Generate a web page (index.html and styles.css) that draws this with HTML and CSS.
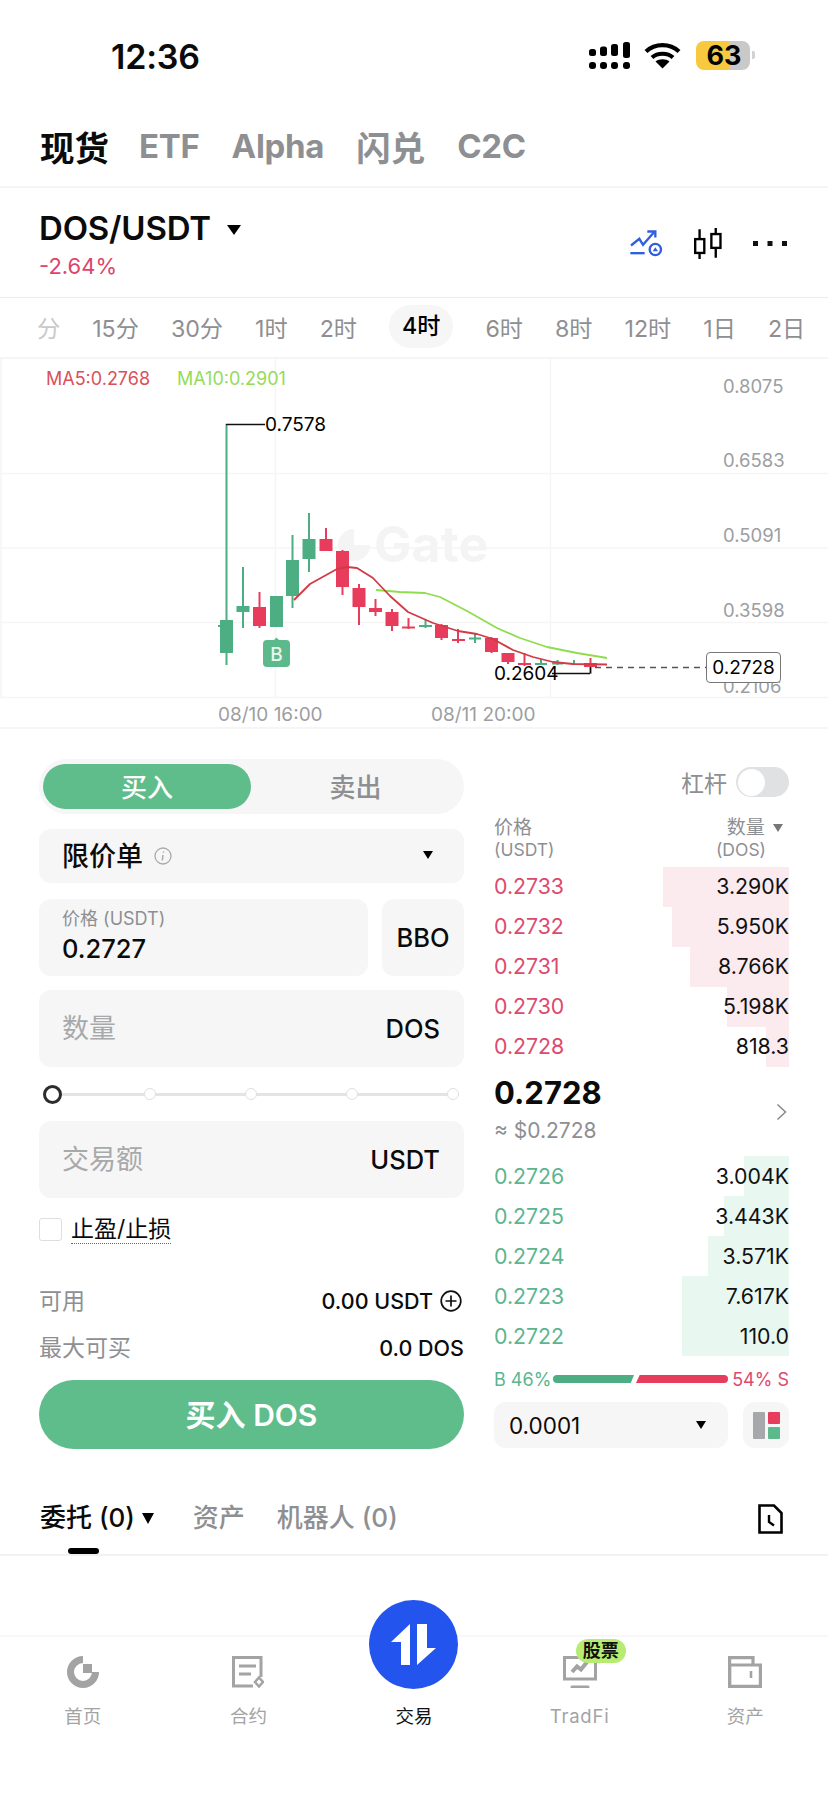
FILE: index.html
```html
<!DOCTYPE html>
<html lang="zh">
<head>
<meta charset="utf-8">
<title>DOS/USDT</title>
<link rel="stylesheet" href="styles.css">
</head>
<body>
<div class="page">
  <header class="status">
    <span class="clock">12:36</span>
    <div class="status-icons">
      <svg class="signal" width="42" height="28" viewBox="0 0 42 28" fill="#000">
        <rect x="1" y="7" width="7" height="7" rx="2.5"/><rect x="12" y="4.5" width="7" height="9.5" rx="2.5"/><rect x="23" y="2" width="7" height="12" rx="2.5"/><rect x="35" y="0" width="7" height="16" rx="2.5"/>
        <rect x="1" y="20" width="7" height="7" rx="3"/><rect x="12" y="20" width="7" height="7" rx="3"/><rect x="23" y="20" width="7" height="7" rx="3"/><rect x="35" y="20" width="7" height="7" rx="3"/>
      </svg>
      <svg class="wifi" width="37" height="27" viewBox="0 0 37 27" fill="none" stroke="#000" stroke-width="4.2">
        <path d="M2 9.5C11 1 26 1 35 9.5"/><path d="M8 15.5C13.5 10.5 23.5 10.5 29 15.5"/><path d="M18.500 26.500L11.500 19.500C15 16.500 22 16.500 25.500 19.500Z" fill="#000" stroke="none"/>
      </svg>
      <div class="battery"><span class="battery-num">63</span></div>
      <span class="battery-nub"></span>
    </div>
  </header>

  <nav class="market-tabs">
    <span class="market-tab market-tab-cjk is-active">现货</span>
    <span class="market-tab">ETF</span>
    <span class="market-tab">Alpha</span>
    <span class="market-tab market-tab-cjk">闪兑</span>
    <span class="market-tab">C2C</span>
  </nav>

  <section class="pair">
    <div class="pair-info">
      <div class="pair-name">DOS/USDT <i class="caret caret-lg"></i></div>
      <div class="pair-change">-2.64%</div>
    </div>
    <div class="pair-actions">
      <svg width="33" height="27" viewBox="32 44 99 80" fill="none" stroke="#2f5fe0" stroke-width="7">
        <path d="M35 90L60 70L71 88L104 50"/><path d="M84 48H108V66"/><path d="M33 113H76"/><circle cx="108" cy="102" r="17"/><path d="M108 95L116 107H100Z" fill="#2f5fe0" stroke="none"/>
      </svg>
      <svg width="30" height="31" viewBox="222 38 88 92" fill="none" stroke="#000" stroke-width="7">
        <path d="M241 42V70M241 112V130M289 38V55M289 97V126"/><rect x="228" y="71" width="27" height="41"/><rect x="276" y="56" width="27" height="41"/>
      </svg>
      <svg width="34" height="6" viewBox="0 0 34 6" fill="#111"><rect x="0" y="0" width="5" height="5"/><rect x="14.500" y="0" width="5" height="5"/><rect x="29" y="0" width="5" height="5"/></svg>
    </div>
  </section>

  <nav class="intervals">
    <span class="interval is-faded">分</span>
    <span class="interval">15分</span>
    <span class="interval">30分</span>
    <span class="interval">1时</span>
    <span class="interval">2时</span>
    <span class="interval is-active">4时</span>
    <span class="interval">6时</span>
    <span class="interval">8时</span>
    <span class="interval">12时</span>
    <span class="interval">1日</span>
    <span class="interval">2日</span>
  </nav>

  <section class="chart">
    <svg class="chart-svg" width="828" height="370" viewBox="0 358 828 370">
      <g stroke="#f5f5f5" stroke-width="1.500">
        <path d="M0 472.500H828M0 547H828M0 621.500H828M0 696.500H828M1 358V696M275.500 358V696M550.500 358V696"/>
      </g>
      <g class="watermark">
        <path d="M354 528a16 16 0 1 0 16 16h-16z" fill="#f4f4f4"/>
        <text x="374" y="561" class="wm-text">Gate</text>
      </g>
      <g stroke="#4cae82" stroke-width="2" fill="none">
        <path d="M226.500 423V664M243 566V627M276.500 595V626M292.500 534V607M309 512V571M425.500 619V627M475 632V642M541 658V664M557.500 659V664M574 659V664"/>
        <path d="M218 625H233M469 637.500H481M535 663H547M552 662.500H563"/>
      </g>
      <g fill="#4cae82">
        <rect x="220" y="619" width="13" height="33"/><rect x="236.500" y="605" width="13" height="6"/><rect x="270" y="595" width="13" height="31"/><rect x="286" y="559" width="13" height="36"/><rect x="302.500" y="538" width="13" height="20"/><rect x="419" y="624" width="13" height="2"/>
      </g>
      <g stroke="#e83c5c" stroke-width="2" fill="none">
        <path d="M259.500 591V627M326 527V550M342.500 549V594M359 583V624M375.500 598V615M392 608V630M408.500 617V628M441.500 623V639M458 628V642M491.500 636V652M508 652V663M524.500 652V665M590.500 657V673"/>
        <path d="M402 626.500H415M452 639H465M518 663H531"/>
      </g>
      <g fill="#e83c5c">
        <rect x="253" y="606" width="13" height="19"/><rect x="319.500" y="538" width="13" height="12"/><rect x="336" y="550" width="13" height="36"/><rect x="352.500" y="587" width="13" height="19"/><rect x="369" y="607" width="13" height="4"/><rect x="385.500" y="611" width="13" height="14"/><rect x="435" y="624" width="13" height="13"/><rect x="485" y="637" width="13" height="14"/><rect x="501.500" y="652" width="13" height="9"/><rect x="584" y="662" width="13" height="4"/>
      </g>
      <polyline points="376,589 400,591 425,592 440,596 467,610 497,627 520,637 547,646 577,652 607,657" fill="none" stroke="#8fdc4e" stroke-width="1.800" stroke-linejoin="round"/>
      <polyline points="294,599 310,583 337,568 347,566 357,567 373,577 390,595 408,611 433,622 458,630 477,633 493,638 513,649 533,656 553,661 573,663 607,663.500" fill="none" stroke="#d23a45" stroke-width="1.800" stroke-linejoin="round"/>
      <path d="M226 423.500H265M552 672.500H590M590.500 666V672" stroke="#111" stroke-width="1.300" fill="none"/>
      <path d="M595 666.500H706" stroke="#555" stroke-width="1.300" stroke-dasharray="6 5" fill="none"/>
      <text x="265" y="429.500" class="ext-text">0.7578</text>
      <text x="494" y="678.500" class="ext-text">0.2604</text>
      <path d="M263 643a4 4 0 0 1 4-4h7l2.500-2.500 2.500 2.500h7a4 4 0 0 1 4 4v19a4 4 0 0 1-4 4h-19a4 4 0 0 1-4-4z" fill="#5cb98c"/>
      <text x="276.500" y="660" class="badge-text">B</text>
      <text x="46" y="383.500" class="ma ma5">MA5:0.2768</text>
      <text x="177" y="383.500" class="ma ma10">MA10:0.2901</text>
      <text x="723" y="392" class="axis">0.8075</text>
      <text x="723" y="466" class="axis">0.6583</text>
      <text x="723" y="541" class="axis">0.5091</text>
      <text x="723" y="616" class="axis">0.3598</text>
      <text x="723" y="691.500" class="axis">0.2106</text>
      <rect x="706.500" y="651.500" width="74" height="30" rx="3.500" fill="#fff" stroke="#777" stroke-width="1"/>
      <text x="743.500" y="672.500" class="tag-text">0.2728</text>
      <text x="218" y="719.500" class="axis axis-date">08/10 16:00</text>
      <text x="431" y="719.500" class="axis axis-date">08/11 20:00</text>
    </svg>
  </section>

  <section class="trade">
    <div class="form">
      <div class="side-toggle">
        <span class="side is-buy">买入</span>
        <span class="side">卖出</span>
      </div>
      <div class="field field-select">
        <span class="order-type">限价单</span>
        <svg class="info" width="18" height="18" viewBox="0 0 18 18" fill="none"><circle cx="9" cy="9" r="8" stroke="#aaa" stroke-width="1.300"/><path d="M9.500 4.500v1.300M9 8l-.7 5.500" stroke="#aaa" stroke-width="1.500"/></svg>
        <i class="caret caret-end"></i>
      </div>
      <div class="price-row">
        <div class="field field-price">
          <span class="field-label">价格 (USDT)</span>
          <span class="field-value">0.2727</span>
        </div>
        <div class="field field-bbo">BBO</div>
      </div>
      <div class="field field-input"><span class="placeholder">数量</span><span class="unit">DOS</span></div>
      <div class="slider">
        <span class="knob"></span><span class="tick"></span><span class="tick"></span><span class="tick"></span><span class="tick"></span>
      </div>
      <div class="field field-input"><span class="placeholder">交易额</span><span class="unit">USDT</span></div>
      <label class="tpsl"><span class="checkbox"></span><span class="tpsl-text">止盈/止损</span></label>
      <div class="info-row info-first"><span class="info-key">可用</span><span class="info-val">0.00 USDT
        <svg width="22" height="22" viewBox="0 0 22 22" fill="none" stroke="#111" stroke-width="1.700"><circle cx="11" cy="11" r="9.800"/><path d="M11 5.500v11M5.500 11h11"/></svg></span></div>
      <div class="info-row"><span class="info-key">最大可买</span><span class="info-val">0.0 DOS</span></div>
      <button class="buy-btn">买入 DOS</button>
    </div>

    <div class="book">
      <div class="leverage"><span>杠杆</span><span class="switch"><span class="switch-knob"></span></span></div>
      <div class="book-head">
        <div><div class="head-top">价格</div><div class="head-sub">(USDT)</div></div>
        <div class="head-right"><div class="head-top head-top-pad">数量 <i class="caret caret-grey"></i></div><div class="head-sub head-sub-pad">(DOS)</div></div>
      </div>
      <div class="row ask" style="--d:126px"><span>0.2733</span><b>3.290K</b></div>
      <div class="row ask" style="--d:117px"><span>0.2732</span><b>5.950K</b></div>
      <div class="row ask" style="--d:99px"><span>0.2731</span><b>8.766K</b></div>
      <div class="row ask" style="--d:62px"><span>0.2730</span><b>5.198K</b></div>
      <div class="row ask" style="--d:23px"><span>0.2728</span><b>818.3</b></div>
      <div class="mid">
        <div>
          <div class="mid-price">0.2728</div>
          <div class="mid-usd">≈ $0.2728</div>
        </div>
        <svg width="11" height="18" viewBox="0 0 11 18" fill="none" stroke="#888" stroke-width="1.500"><path d="M1.500 1.500L9.500 9L1.500 16.500"/></svg>
      </div>
      <div class="row bid" style="--d:45px"><span>0.2726</span><b>3.004K</b></div>
      <div class="row bid" style="--d:65px"><span>0.2725</span><b>3.443K</b></div>
      <div class="row bid" style="--d:81px"><span>0.2724</span><b>3.571K</b></div>
      <div class="row bid" style="--d:107px"><span>0.2723</span><b>7.617K</b></div>
      <div class="row bid" style="--d:107px"><span>0.2722</span><b>110.0</b></div>
      <div class="ratio">
        <span class="ratio-b">B 46%</span>
        <span class="bar bar-b"></span>
        <span class="bar bar-s"></span>
        <span class="ratio-s">54% S</span>
      </div>
      <div class="book-foot">
        <div class="precision"><span>0.0001</span><i class="caret"></i></div>
        <div class="layout-btn">
          <svg width="27" height="27" viewBox="0 0 27 27"><rect width="12" height="27" rx="1" fill="#a6a8ab"/><rect x="15" width="12" height="12" rx="1" fill="#e83c5c"/><rect x="15" y="15" width="12" height="12" rx="1" fill="#5cb98c"/></svg>
        </div>
      </div>
    </div>
  </section>

  <nav class="order-tabs">
    <span class="order-tab is-active">委托 (0) <i class="caret caret-md"></i></span>
    <span class="order-tab">资产</span>
    <span class="order-tab">机器人 (0)</span>
    <svg class="order-doc" width="25" height="30" viewBox="0 0 25 30" fill="none" stroke="#000" stroke-width="2.600"><path d="M1.500 1.500H16L23.500 9V28.500H1.500Z"/><path d="M11 11V18L16 21.500" stroke-width="2.400"/></svg>
  </nav>

  <div class="spacer"></div>

  <footer class="tabbar">
    <div class="tab">
      <svg width="32" height="32" viewBox="0 0 32 32" fill="none"><path d="M16 3.500A12.500 12.500 0 1 0 28.500 16" stroke="#a3a3a3" stroke-width="7"/><rect x="16" y="8" width="9" height="9" fill="#a3a3a3"/></svg>
      <span>首页</span>
    </div>
    <div class="tab">
      <svg width="32" height="32" viewBox="0 0 32 32" fill="none" stroke="#a3a3a3" stroke-width="3"><path d="M21 30H1.500V1.500H29V21"/><path d="M7 10H24M7 18H19"/><path d="M27 21.500L31 26L27 30.500L23 26Z" stroke-width="2.500"/></svg>
      <span>合约</span>
    </div>
    <div class="tab tab-main">
      <div class="trade-fab">
        <svg width="45" height="41" viewBox="0 0 45 41" fill="#fff"><path d="M19 0V41H10V18H0Z"/><path d="M26 41V0H36V24H45Z"/></svg>
      </div>
      <span>交易</span>
    </div>
    <div class="tab">
      <svg width="34" height="32" viewBox="0 0 34 32" fill="none" stroke="#a3a3a3" stroke-width="3"><path d="M1.500 1.500H32.500V23H1.500Z"/><path d="M9 31H25" stroke-linecap="round"/><path d="M9 16L14 10.500L18 13.500L24 6" stroke-width="4"/></svg>
      <span class="tab-latin">TradFi</span>
      <em class="tab-badge">股票</em>
    </div>
    <div class="tab">
      <svg width="34" height="32" viewBox="0 0 34 32" fill="none" stroke="#a3a3a3" stroke-width="3.200"><path d="M1.600 30.400V1.600H25V9"/><path d="M1.600 9H32.400V30.400H1.600Z"/><path d="M23 15V22" stroke-width="2.600"/></svg>
      <span>资产</span>
    </div>
  </footer>
</div>
</body>
</html>
```

FILE: styles.css
```css
* { box-sizing: border-box; }
html, body { margin: 0; padding: 0; background: #fff; }
body {
  font-family: Inter, "Noto Sans CJK SC", "Noto Sans", sans-serif;
  color: #0b0b0b;
}
.page { width: 828px; height: 1795px; display: flex; flex-direction: column; overflow: hidden; }
i { font-style: normal; }

.caret {
  display: inline-block; width: 0; height: 0;
  border-left: 5.5px solid transparent; border-right: 5.5px solid transparent;
  border-top: 8px solid #000;
}
.caret-lg { border-left-width: 7px; border-right-width: 7px; border-top-width: 10px; margin-left: 8px; vertical-align: 5px; }
.caret-md { border-left-width: 6.5px; border-right-width: 6.5px; border-top-width: 11px; margin-left: 0; vertical-align: 3px; }
.caret-grey { border-top-color: #777; margin-left: 3px; vertical-align: 2px; }
.caret-end { margin-left: auto; margin-right: 6px; }

.status { height: 100px; display: flex; justify-content: space-between; padding: 36px 73px 0 111px; }
.clock { font-size: 34px; line-height: 42px; font-weight: 600; letter-spacing: -0.2px; }
.status-icons { display: flex; align-items: flex-start; padding-top: 6px; height: 40px; }
.signal { margin-right: 14px; }
.wifi { margin-right: 15px; }
.battery {
  width: 54px; height: 29px; border-radius: 8px; margin-top: -1px;
  background: linear-gradient(to right, #f6c93f 61%, #c9c9c9 61%);
  display: flex; align-items: center; justify-content: center; padding-left: 2px;
}
.battery-num { font-size: 27px; font-weight: 700; color: #000; }
.battery-nub { width: 3px; height: 8px; margin: 9px 0 0 2px; background: #d2d2d2; border-radius: 0 2px 2px 0; }

.market-tabs { height: 88px; display: flex; gap: 32px; align-items: center; padding: 6px 0 0 40px; border-bottom: 2px solid #f5f5f5; }
.market-tab { font-size: 33px; font-weight: 700; color: #8e8f92; letter-spacing: -0.3px; }
.market-tab-cjk { font-size: 34.500px; letter-spacing: 0; }
.market-tab.is-active { color: #0b0b0b; margin-right: -2px; }

.pair { height: 110px; display: flex; justify-content: space-between; align-items: center; padding: 0 41px 0 39px; border-bottom: 1px solid #ececec; }
.pair-info { padding-top: 4px; }
.pair-name { font-size: 33px; line-height: 40px; font-weight: 600; letter-spacing: -0.2px; white-space: nowrap; }
.pair-change { font-size: 22px; line-height: 30px; color: #e0446a; margin-top: 3px; }
.pair-actions { display: flex; align-items: center; gap: 30px; padding-top: 2px; }

.intervals { height: 61px; display: flex; align-items: center; gap: 32px; padding: 0 0 2px 37px; border-bottom: 2px solid #f5f5f5; overflow: hidden; white-space: nowrap; }
.interval { font-size: 23.200px; color: #8e8f92; flex: none; }
.interval.is-faded { color: #c9c9c9; }
.interval.is-active { color: #000; font-weight: 500; background: #f6f6f6; border-radius: 22px; padding: 0 13px; line-height: 43px; }

.chart { height: 370px; border-bottom: 2px solid #f5f5f5; }
.chart-svg { display: block; }
.wm-text { font-size: 50px; font-weight: 700; fill: #f4f4f4; }
.ma { font-size: 18px; }
.ma5 { fill: #d9505a; }
.ma10 { fill: #93dc5a; }
.axis { font-size: 18.500px; fill: #9c9ea1; }
.axis-date { font-size: 19px; }
.ext-text { font-size: 19px; fill: #000; }
.tag-text { font-size: 19px; fill: #000; text-anchor: middle; }
.badge-text { font-size: 19px; font-weight: 500; fill: #e8f7ef; text-anchor: middle; }

.trade { display: grid; grid-template-columns: 425px 295px; column-gap: 30px; padding: 30px 0 0 39px; height: 720px; }
.form { display: flex; flex-direction: column; }
.side-toggle { height: 55px; border-radius: 28px; background: #f6f6f6; display: flex; padding: 5px 4px; }
.side { flex: 1; display: flex; align-items: center; justify-content: center; font-size: 26px; font-weight: 500; color: #8e8f92; border-radius: 23px; padding-bottom: 3px; }
.side.is-buy { flex: none; width: 208px; background: #5fbd8b; color: #fff; }

.field { background: #f6f6f6; border-radius: 12px; }
.field-select { height: 54px; margin-top: 15px; display: flex; align-items: center; padding: 0 25px 3px 23px; }
.order-type { font-size: 27px; font-weight: 500; }
.info { margin-left: 11px; margin-top: 3px; }
.price-row { display: flex; gap: 14px; margin-top: 16px; }
.field-price { flex: 1; height: 77px; padding: 9px 23px 0; display: flex; flex-direction: column; }
.field-label { font-size: 18px; line-height: 22px; color: #8e8f92; }
.field-value { font-size: 25.500px; line-height: 32px; font-weight: 500; margin-top: 3px; }
.field-bbo { width: 82px; display: flex; align-items: center; justify-content: center; font-size: 25.500px; font-weight: 500; }
.field-input { height: 77px; display: flex; justify-content: space-between; align-items: center; padding: 0 24px 4px 23px; margin-top: 14px; }
.placeholder { font-size: 27px; color: #a8a9ab; }
.unit { font-size: 25.500px; font-weight: 500; padding-top: 3px; }

.slider {
  height: 54px; display: grid; grid-template-columns: repeat(4, 101px) 12px; align-items: center;
  padding-left: 4px; justify-items: start;
  background: linear-gradient(#e4e4e4, #e4e4e4) center / calc(100% - 14px) 3px no-repeat;
}
.slider + .field-input { margin-top: 0; }
.knob { width: 19px; height: 19px; border-radius: 50%; border: 3px solid #2c2c2c; background: #fff; }
.tick { width: 12px; height: 12px; border-radius: 50%; border: 1.500px solid #e0e0e0; background: #fff; }

.tpsl { display: flex; align-items: center; gap: 9px; height: 27px; margin-top: 18px; }
.checkbox { width: 23px; height: 23px; border: 1.500px solid #dedede; border-radius: 3px; background: #fff; }
.tpsl-text { font-size: 23px; line-height: 28px; border-bottom: 1.500px dotted #666; font-weight: 400; }

.info-row { display: flex; justify-content: space-between; align-items: center; height: 28px; margin-top: 19px; font-size: 23px; }
.info-first { margin-top: 44px; }
.info-key { color: #8e8f92; padding-bottom: 4px; }
.info-val { display: flex; align-items: center; gap: 7px; font-weight: 450; font-size: 21.500px; padding-bottom: 1px; }
.info-val svg { margin-right: 2px; }
.buy-btn {
  margin-top: 18px; height: 69px; border: 0; border-radius: 35px; background: #5fbd8b; color: #fff;
  padding: 0 0 3px;
  font: 600 30px Inter, "Noto Sans CJK SC", sans-serif;
}

.book { display: flex; flex-direction: column; }
.leverage { display: flex; justify-content: flex-end; align-items: center; gap: 9px; height: 30px; margin-top: 8px; font-size: 23px; color: #8e8f92; }
.switch { width: 53px; height: 30px; border-radius: 15px; background: #dfe1e2; padding: 1.500px; display: flex; }
.switch-knob { width: 27px; height: 27px; border-radius: 50%; background: #fff; }
.book-head { height: 70px; display: flex; justify-content: space-between; padding: 18px 0 0 0; color: #8e8f92; }
.head-top { font-size: 19px; line-height: 25px; }
.head-sub { font-size: 17.500px; line-height: 21px; margin-top: -1px; }
.head-right { text-align: right; }
.head-top-pad { padding-right: 6px; white-space: nowrap; }
.head-sub-pad { padding-right: 23px; }

.row {
  height: 40px; display: flex; justify-content: space-between; align-items: center;
  font-size: 21.300px; padding: 0 0 3px 0;
}
.row b { font-weight: 400; color: #111; }
.ask { background: linear-gradient(to left, #fbebee var(--d), transparent var(--d)); }
.bid { background: linear-gradient(to left, #e9f7f1 var(--d), transparent var(--d)); padding-bottom: 1px; }
.ask span { color: #dd4a6d; }
.bid span { color: #5bb58e; }

.mid { height: 89px; display: flex; justify-content: space-between; align-items: center; padding-right: 2px; }
.mid-price { font-size: 31px; line-height: 38px; font-weight: 700; margin-top: -5px; }
.mid-usd { font-size: 21px; line-height: 28px; color: #8e8f92; margin-top: 5px; }

.ratio { display: flex; align-items: center; height: 46px; font-size: 18px; white-space: nowrap; }
.ratio-b { color: #5bb58e; width: 59px; flex: none; }
.ratio-s { color: #dd4a6d; margin-left: auto; }
.bar { height: 8px; flex: none; }
.bar-b { width: 81px; background: #4cae82; border-radius: 4px 0 0 4px; clip-path: polygon(0 0, 100% 0, 96% 100%, 0 100%); }
.bar-s { width: 92px; margin-left: 2px; background: #e83c5c; border-radius: 0 4px 4px 0; clip-path: polygon(4% 0, 100% 0, 100% 100%, 0 100%); }
.book-foot { display: flex; justify-content: space-between; height: 46px; }
.precision { width: 234px; background: #f6f6f6; border-radius: 12px; display: flex; justify-content: space-between; align-items: center; padding: 0 22px 0 15px; font-size: 22.500px; }
.layout-btn { width: 46px; background: #f6f6f6; border-radius: 12px; display: flex; align-items: center; justify-content: center; }

.order-tabs { height: 107px; flex: none; position: relative; display: flex; align-items: flex-start; padding: 49px 0 0 40px; gap: 39px; border-bottom: 2px solid #f2f2f2; }
.order-tab { font-size: 26px; line-height: 40px; color: #8e8f92; font-weight: 450; position: relative; white-space: nowrap; }
.order-tab + .order-tab + .order-tab { margin-left: -7px; }
.order-tab.is-active { color: #0b0b0b; font-weight: 500; }
.order-tab.is-active::after { content: ""; position: absolute; left: 28px; top: 50px; width: 31px; height: 6px; border-radius: 3px; background: #000; }
.order-doc { margin-left: auto; margin-right: 45px; margin-top: 6px; }

.spacer { flex: 1; }
.tabbar { height: 160px; flex: none; border-top: 2px solid #f7f7f7; display: grid; grid-template-columns: repeat(5, 1fr); }
.tab { position: relative; display: flex; flex-direction: column; align-items: center; padding-top: 19px; font-size: 18.500px; color: #a3a3a3; }
.tab span { margin-top: 16px; line-height: 24px; }
.tab-latin { letter-spacing: .8px; }
.tab-main { color: #111; padding-top: 51px; }
.trade-fab {
  position: absolute; left: 50%; top: -37px; width: 89px; height: 89px; margin-left: -44.5px;
  border-radius: 50%; background: #2354ee; display: flex; align-items: center; justify-content: center;
}
.tab-badge {
  position: absolute; left: 79px; top: 2px; width: 50px; height: 24px; border-radius: 12px;
  background: #b7ec73; color: #111; font-style: normal; font-size: 18px; font-weight: 600; line-height: 24px; text-align: center;
}
```
